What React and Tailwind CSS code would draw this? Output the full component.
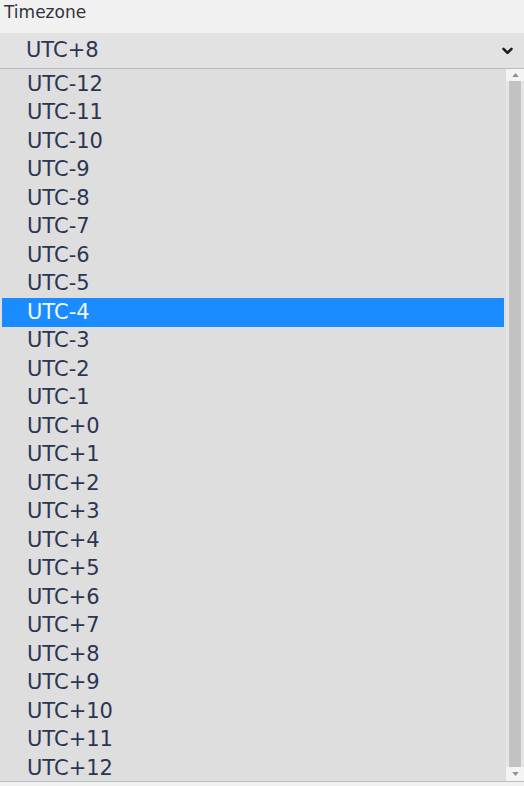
import React from "react";

const zones = [];
for (let i = -12; i <= 12; i++) zones.push(i < 0 ? `UTC${i}` : `UTC+${i}`);

const ChevronDown = () => (
  <svg width="11" height="8" viewBox="0 0 11 8" fill="none">
    <path d="M1.5 1.8 L5.5 5.8 L9.5 1.8" stroke="#1c1c1c" strokeWidth="2.6" strokeLinecap="round" strokeLinejoin="round" />
  </svg>
);

const ScrollArrow = ({ up }) => (
  <svg width="7" height="4" viewBox="0 0 8 5">
    <path d={up ? "M0 5 L4 0 L8 5 Z" : "M0 0 L4 5 L8 0 Z"} fill="#8f8f8f" />
  </svg>
);

const App = () => {
  const selected = "UTC+8";
  const hovered = "UTC-4";

  return (
    <div className="flex h-[786px] w-[524px] flex-col bg-[#f1f1f1] font-['DejaVu_Sans',sans-serif] text-[#2c3552]">
      <div className="h-[33px] px-1 pt-[2px] text-[17px] leading-[20px] text-[#30343f]">Timezone</div>

      <div className="flex h-[35px] items-center justify-between bg-[#e2e2e2] pl-[26px] pr-[11px] text-[21px]">
        <span>{selected}</span>
        <ChevronDown />
      </div>

      <div className="flex h-[714px] border-y border-[#b3bcc7] bg-[#dedede]">
        <ul className="flex-1 px-[2px] pt-[1px]">
          {zones.map((z) => (
            <li
              key={z}
              className={
                z === hovered
                  ? "flex h-[28.5px] items-center bg-[#1a8cff] pl-[25px] text-[21px] text-[#f2f8ff]"
                  : "flex h-[28.5px] items-center pl-[25px] text-[21px]"
              }
            >
              {z}
            </li>
          ))}
        </ul>
        <div className="flex w-[18px] flex-col items-center bg-[#e6e6e6]">
          <div className="flex h-[12px] w-full items-center justify-center bg-[#f4f4f4]">
            <ScrollArrow up />
          </div>
          <div className="w-[12px] flex-1 bg-[#c2c2c2]" />
          <div className="flex h-[14px] w-full items-center justify-center bg-[#f4f4f4]">
            <ScrollArrow />
          </div>
        </div>
      </div>
    </div>
  );
};

export default App;
